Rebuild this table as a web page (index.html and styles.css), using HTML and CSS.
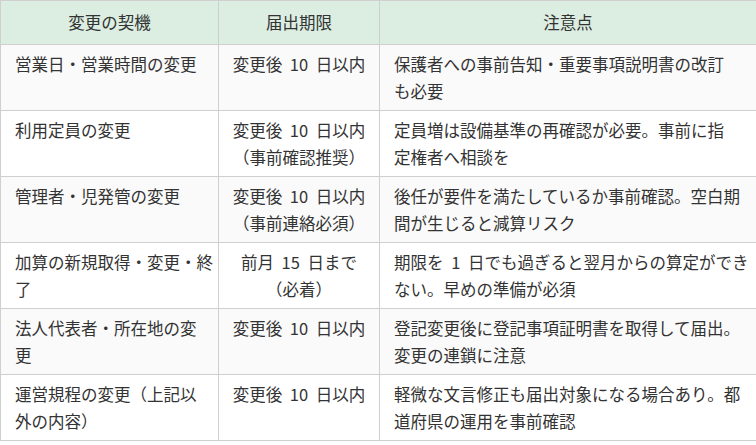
FILE: index.html
```html
<!DOCTYPE html>
<html lang="ja">
<head>
<meta charset="utf-8">
<title>変更届の期限</title>
<link rel="stylesheet" href="styles.css">
</head>
<body>
<table class="deadline-table">
  <colgroup>
    <col class="col-trigger">
    <col class="col-deadline">
    <col class="col-notes">
  </colgroup>
  <thead>
    <tr>
      <th>変更の契機</th>
      <th>届出期限</th>
      <th>注意点</th>
    </tr>
  </thead>
  <tbody>
    <tr>
      <td>営業日・営業時間の変更</td>
      <td class="center">変更後 10 日以内</td>
      <td>保護者への事前告知・重要事項説明書の改訂<br>も必要</td>
    </tr>
    <tr>
      <td>利用定員の変更</td>
      <td class="center">変更後 10 日以内<br>（事前確認推奨）</td>
      <td>定員増は設備基準の再確認が必要。事前に指<br>定権者へ相談を</td>
    </tr>
    <tr>
      <td>管理者・児発管の変更</td>
      <td class="center">変更後 10 日以内<br>（事前連絡必須）</td>
      <td>後任が要件を満たしているか事前確認。空白期<br>間が生じると減算リスク</td>
    </tr>
    <tr>
      <td>加算の新規取得・変更・終<br>了</td>
      <td class="center">前月 15 日まで<br>（必着）</td>
      <td>期限を 1 日でも過ぎると翌月からの算定ができ<br>ない。早めの準備が必須</td>
    </tr>
    <tr>
      <td>法人代表者・所在地の変<br>更</td>
      <td class="center">変更後 10 日以内</td>
      <td>登記変更後に登記事項証明書を取得して届出。<br>変更の連鎖に注意</td>
    </tr>
    <tr>
      <td>運営規程の変更（上記以<br>外の内容）</td>
      <td class="center">変更後 10 日以内</td>
      <td>軽微な文言修正も届出対象になる場合あり。都<br>道府県の運用を事前確認</td>
    </tr>
  </tbody>
</table>
</body>
</html>
```
FILE: styles.css
```css
html, body {
  margin: 0;
  padding: 0;
  background: #ffffff;
}

body {
  font-family: "Noto Sans CJK JP", "Noto Sans", sans-serif;
  font-size: 16.5px;
  color: #333333;
}

.deadline-table {
  width: 756px;
  border-collapse: collapse;
  table-layout: fixed;
  line-height: 27px;
  word-spacing: 4px;
}

.col-trigger { width: 218px; }
.col-deadline { width: 161px; }
.col-notes { width: 377px; }

.deadline-table th,
.deadline-table td {
  border: 1px solid #cfcfcf;
  vertical-align: top;
  white-space: nowrap;
}

.deadline-table th {
  background: #dbeee1;
  font-weight: normal;
  text-align: center;
  padding: 8px 4px;
}

.deadline-table td {
  padding: 6px 4px 5px 14px;
  text-align: left;
}

.deadline-table td.center {
  text-align: center;
  padding-left: 4px;
  padding-right: 4px;
}

.deadline-table tbody tr:nth-child(odd) td {
  background: #fafafa;
}

.deadline-table tbody tr:nth-child(even) td {
  background: #ffffff;
}
```
